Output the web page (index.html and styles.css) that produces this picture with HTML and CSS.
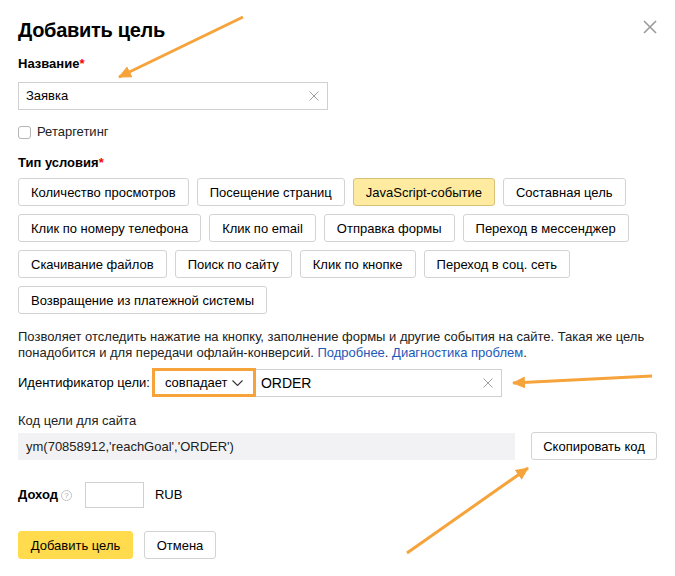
FILE: index.html
```html
<!DOCTYPE html>
<html lang="ru">

<head>
    <meta charset="UTF-8">
    <meta name="viewport" content="width=device-width, initial-scale=1.0">
    <title>Добавить цель</title>
    <link rel="stylesheet" href="styles.css">
</head>

<body>
    <div class="dialog">
        <div class="dialog-head">
            <h1>Добавить цель</h1>
            <button class="close" type="button" aria-label="Закрыть">
                <svg width="14" height="14" viewBox="0 0 14 14">
                    <path d="M1 1 L13 13 M13 1 L1 13" stroke="#9a9a9a" stroke-width="1.6" fill="none" />
                </svg>
            </button>
        </div>

        <div class="field-label">Название<span class="req">*</span></div>
        <div class="text-input name-input">
            <span class="value">Заявка</span>
            <svg class="clear" width="10" height="10" viewBox="0 0 10 10">
                <path d="M0.5 0.5 L9.5 9.5 M9.5 0.5 L0.5 9.5" stroke="#a0a0a0" stroke-width="1" fill="none" />
            </svg>
        </div>

        <label class="checkbox">
            <span class="box"></span>
            Ретаргетинг
        </label>

        <div class="field-label type-label">Тип условия<span class="req">*</span></div>
        <div class="types">
            <button class="btn" type="button">Количество просмотров</button>
            <button class="btn" type="button">Посещение страниц</button>
            <button class="btn btn-selected" type="button">JavaScript-событие</button>
            <button class="btn" type="button">Составная цель</button>
            <button class="btn" type="button">Клик по номеру телефона</button>
            <button class="btn" type="button">Клик по email</button>
            <button class="btn" type="button">Отправка формы</button>
            <button class="btn" type="button">Переход в мессенджер</button>
            <button class="btn" type="button">Скачивание файлов</button>
            <button class="btn" type="button">Поиск по сайту</button>
            <button class="btn" type="button">Клик по кнопке</button>
            <button class="btn" type="button">Переход в соц. сеть</button>
            <button class="btn" type="button">Возвращение из платежной системы</button>
        </div>

        <p class="hint">Позволяет отследить нажатие на кнопку, заполнение формы и другие события на сайте. Такая же цель<br>понадобится и для передачи офлайн-конверсий. <a href="#">Подробнее</a>. <a href="#">Диагностика проблем</a>.</p>

        <div class="ident-row">
            <span class="ident-label">Идентификатор цели:</span>
            <div class="select">
                <span>совпадает</span>
                <svg width="11" height="6" viewBox="0 0 11 6">
                    <path d="M0.5 0.5 L5.5 5.5 L10.5 0.5" stroke="#333" stroke-width="1.1" fill="none" />
                </svg>
            </div>
            <div class="text-input ident-input">
                <span class="value">ORDER</span>
                <svg class="clear" width="10" height="10" viewBox="0 0 10 10">
                    <path d="M0.5 0.5 L9.5 9.5 M9.5 0.5 L0.5 9.5" stroke="#a0a0a0" stroke-width="1" fill="none" />
                </svg>
            </div>
        </div>

        <div class="code-label">Код цели для сайта</div>
        <div class="code-row">
            <div class="code">ym(70858912,'reachGoal','ORDER')</div>
            <button class="btn copy" type="button">Скопировать код</button>
        </div>

        <div class="income-row">
            <span class="income-label">Доход</span>
            <span class="help">?</span>
            <div class="text-input income-input"></div>
            <span class="currency">RUB</span>
        </div>

        <div class="actions">
            <button class="btn btn-primary" type="button">Добавить цель</button>
            <button class="btn" type="button">Отмена</button>
        </div>
    </div>

    <!-- annotation arrows drawn over the screenshot -->
    <svg class="arrows" width="675" height="576" viewBox="0 0 675 576">
        <defs>
            <marker id="head" markerUnits="userSpaceOnUse" markerWidth="14" markerHeight="12" refX="12" refY="6" orient="auto">
                <path d="M0 0 L13 6 L0 12 Z" fill="#f5a33a" />
            </marker>
        </defs>
        <line x1="243" y1="17" x2="119" y2="77" stroke="#f5a33a" stroke-width="3" marker-end="url(#head)" />
        <line x1="652" y1="376" x2="513" y2="383" stroke="#f5a33a" stroke-width="3" marker-end="url(#head)" />
        <line x1="407" y1="553" x2="528" y2="468" stroke="#f5a33a" stroke-width="3" marker-end="url(#head)" />
    </svg>
</body>

</html>
```

FILE: styles.css
```css
/* Reset and Base Styling */
* {
    margin: 0;
    padding: 0;
    box-sizing: border-box;
}

body {
    font-family: "Liberation Sans", Arial, sans-serif;
    font-size: 13px;
    line-height: 16px;
    color: #000;
    background: #fff;
    width: 675px;
    height: 576px;
    position: relative;
    overflow: hidden;
}

.dialog {
    width: 657px;
    padding: 17px 0 0 18px;
}

.dialog-head {
    display: flex;
    justify-content: space-between;
    align-items: flex-start;
    margin-bottom: 13px;
}

h1 {
    font-size: 20px;
    line-height: 26px;
    letter-spacing: -0.3px;
    font-weight: bold;
}

.close {
    background: none;
    border: none;
    margin-top: 3px;
    width: 14px;
    height: 14px;
    cursor: pointer;
}

.close svg {
    display: block;
}

.field-label {
    font-weight: bold;
    margin-bottom: 10px;
}

.req {
    color: #f00;
}

.text-input {
    display: flex;
    align-items: center;
    justify-content: space-between;
    height: 28px;
    border: 1px solid #d0d0d0;
    padding: 0 8px 0 7px;
    background: #fff;
}

.name-input {
    width: 310px;
}

.clear {
    display: block;
    flex-shrink: 0;
}

.checkbox {
    display: flex;
    align-items: center;
    gap: 6px;
    margin-top: 14px;
    color: #222;
    cursor: pointer;
}

.checkbox .box {
    width: 13px;
    height: 13px;
    border: 1px solid #b5b5b5;
    border-radius: 3px;
}

.type-label {
    margin-top: 15px;
    margin-bottom: 7px;
}

.types {
    display: flex;
    flex-wrap: wrap;
    gap: 8px;
}

.btn {
    font-family: inherit;
    font-size: 13px;
    height: 28px;
    padding: 0 12px;
    background: #fff;
    color: #000;
    border: 1px solid #d3d3d3;
    border-radius: 3px;
    cursor: pointer;
}

.btn-selected {
    background: #ffeba0;
    border-color: #d9c27a;
}

.btn-primary {
    background: #ffdb4d;
    border-color: #ffdb4d;
}

.hint {
    margin-top: 15px;
    width: 640px;
    color: #222;
}

.hint a {
    color: #2259b8;
    text-decoration: none;
}

.ident-row {
    display: flex;
    align-items: center;
    margin-top: 7px;
}

.ident-label {
    margin-right: 2px;
}

.select {
    display: flex;
    align-items: center;
    justify-content: space-between;
    flex-shrink: 0;
    height: 29px;
    width: 104px;
    padding: 0 10px 0 10px;
    border: 3px solid #f5a33a;
    font-size: 13px;
}

.select svg {
    flex-shrink: 0;
    display: block;
}

.ident-input {
    width: 246px;
    height: 28px;
    font-size: 14px;
    padding-left: 5px;
    border-left: none;
}

.code-label {
    margin-top: 16px;
    color: #222;
}

.code-row {
    display: flex;
    align-items: center;
    margin-top: 3px;
}

.code {
    width: 497px;
    height: 27px;
    line-height: 27px;
    padding-left: 8px;
    background: #f2f2f4;
    color: #222;
}

.copy {
    margin-left: 16px;
    width: 126px;
    padding: 0;
}

.income-row {
    display: flex;
    align-items: center;
    margin-top: 22px;
}

.income-label {
    font-weight: bold;
}

.help {
    width: 11px;
    height: 11px;
    margin-left: 3px;
    border: 1px solid #c4c4c4;
    border-radius: 50%;
    font-size: 8px;
    line-height: 9px;
    text-align: center;
    color: #b0b0b0;
}

.income-input {
    width: 59px;
    height: 26px;
    margin-left: 13px;
}

.currency {
    margin-left: 11px;
}

.actions {
    display: flex;
    gap: 11px;
    margin-top: 23px;
}

.actions .btn-primary {
    width: 115px;
    padding: 0;
}

.actions .btn:last-child {
    width: 72px;
    padding: 0;
}

.arrows {
    position: absolute;
    left: 0;
    top: 0;
    pointer-events: none;
}
```
